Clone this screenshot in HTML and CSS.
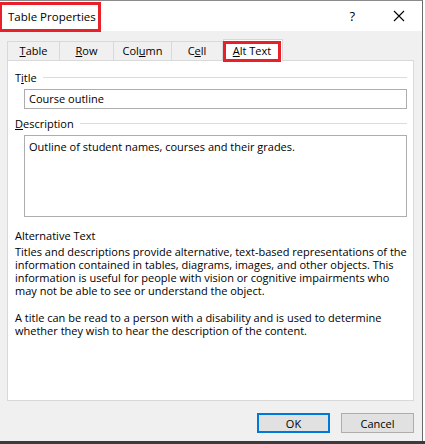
FILE: index.html
```html
<!DOCTYPE html>
<html lang="en">
<head>
    <meta charset="UTF-8">
    <title>Table Properties</title>
    <link rel="stylesheet" href="styles.css">
</head>
<body>
    <div class="window">
        <!-- Title bar -->
        <div class="titlebar">
            <div class="title">Table Properties</div>
            <div class="controls">
                <span class="help">?</span>
                <svg class="close" width="12" height="12" viewBox="0 0 12 12">
                    <path d="M1 1 L11 11 M11 1 L1 11" stroke="#000" stroke-width="1.1" fill="none"/>
                </svg>
            </div>
        </div>

        <!-- Tabs -->
        <div class="body">
            <ul class="tabs">
                <li class="tab t-table"><u>T</u>able</li>
                <li class="tab t-row"><u>R</u>ow</li>
                <li class="tab t-col">Col<u>u</u>mn</li>
                <li class="tab t-cell">C<u>e</u>ll</li>
                <li class="tab active"><span class="mark"><u>A</u>lt Text</span></li>
            </ul>

            <div class="panel">
                <div class="group-label">T<u>i</u>tle</div>
                <div class="field">Course outline</div>

                <div class="group-label"><u>D</u>escription</div>
                <div class="field area">Outline of student names, courses and their grades.</div>

                <div class="alt-head">Alternative Text</div>
                <p class="info">Titles and descriptions provide alternative, text-based representations of the information contained in tables, diagrams, images, and other objects. This information is useful for people with vision or cognitive impairments who may not be able to see or understand the object.</p>
                <p class="info">A title can be read to a person with a disability and is used to determine whether they wish to hear the description of the content.</p>
            </div>

            <!-- Buttons -->
            <div class="buttons">
                <button class="btn default">OK</button>
                <button class="btn">Cancel</button>
            </div>
        </div>
    </div>
    <div class="taskbar"></div>
</body>
</html>
```

FILE: styles.css
```css
/* Dialog styles */
html {
    font-family: "Open Sans", "Noto Sans", Arial, sans-serif;
    font-size: 11px;
}

body {
    margin: 0;
    padding: 0;
    background-color: #fff;
    color: #000;
    width: 425px;
    height: 444px;
    overflow: hidden;
}

.window {
    width: 422px;
    height: 440px;
    border-top: 1px solid #8a8a8a;
    border-right: 1px solid #6a6a6a;
    background-color: #f0f0f0;
    display: flex;
    flex-direction: column;
}

.titlebar {
    height: 30px;
    background-color: #fff;
    display: flex;
    align-items: center;
    justify-content: space-between;
}

.title {
    box-sizing: border-box;
    height: 30px;
    width: 101px;
    margin-top: 1px;
    border: 3px solid #e8202a;
    border-left-width: 2px;
    padding-left: 6px;
    line-height: 23px;
    font-size: 11.5px;
    white-space: nowrap;
}

.controls {
    display: flex;
    align-items: center;
}

.help {
    font-size: 13px;
    margin-right: 38px;
}

.close {
    margin-right: 17px;
}

.body {
    flex: 1;
    display: flex;
    flex-direction: column;
    padding: 0 7px 0 7px;
}

.tabs {
    list-style: none;
    margin: 8px 0 0 0;
    padding: 0;
    display: flex;
    align-items: flex-end;
    height: 21px;
    position: relative;
    z-index: 1;
}

.tab {
    box-sizing: border-box;
    height: 19px;
    border: 1px solid #d9d9d9;
    border-bottom: none;
    border-right: none;
    text-align: center;
    line-height: 17px;
    white-space: nowrap;
}

.t-table { width: 52px; }
.t-row { width: 54px; }
.t-col { width: 58px; }
.t-cell { width: 52px; border-right: 1px solid #d9d9d9; }

.tab.active {
    width: 60px;
    height: 22px;
    margin-bottom: -1px;
    background-color: #fff;
    border: 1px solid #d9d9d9;
    border-bottom: none;
    padding: 1px 0 0 0;
}

.mark {
    display: block;
    box-sizing: border-box;
    height: 21px;
    margin: 0 1px 0 -1px;
    border: 3px solid #e8202a;
    line-height: 14px;
    background-color: #fff;
}

.panel {
    box-sizing: border-box;
    height: 341px;
    margin-right: 1px;
    background-color: #fff;
    border: 1px solid #d9d9d9;
    padding: 9px 6px 0 7px;
}

.group-label {
    display: flex;
    align-items: center;
    height: 14px;
}

.group-label::after {
    content: "";
    flex: 1;
    height: 1px;
    background-color: #dcdcdc;
    margin-left: 6px;
}

.field {
    box-sizing: border-box;
    margin: 5px 0 0 9px;
    height: 20px;
    border: 1px solid #adadad;
    padding: 1px 4px;
    line-height: 16px;
    margin-bottom: 7px;
}

.field.area {
    height: 82px;
    padding-top: 3px;
    margin-bottom: 0;
}

.alt-head {
    margin-top: 11px;
}

.info {
    margin: 2px 0 14px 0;
    line-height: 13px;
}

.buttons {
    display: flex;
    justify-content: flex-end;
    margin-top: 12px;
    padding-right: 1px;
}

.btn {
    box-sizing: border-box;
    width: 73px;
    height: 20px;
    margin-left: 11px;
    background-color: #e1e1e1;
    border: 1px solid #adadad;
    font-family: inherit;
    font-size: 11px;
    color: #000;
    padding: 0;
}

.btn.default {
    border: 2px solid #0078d7;
}

.taskbar {
    height: 3px;
    background-color: #3b3b3b;
}
```
